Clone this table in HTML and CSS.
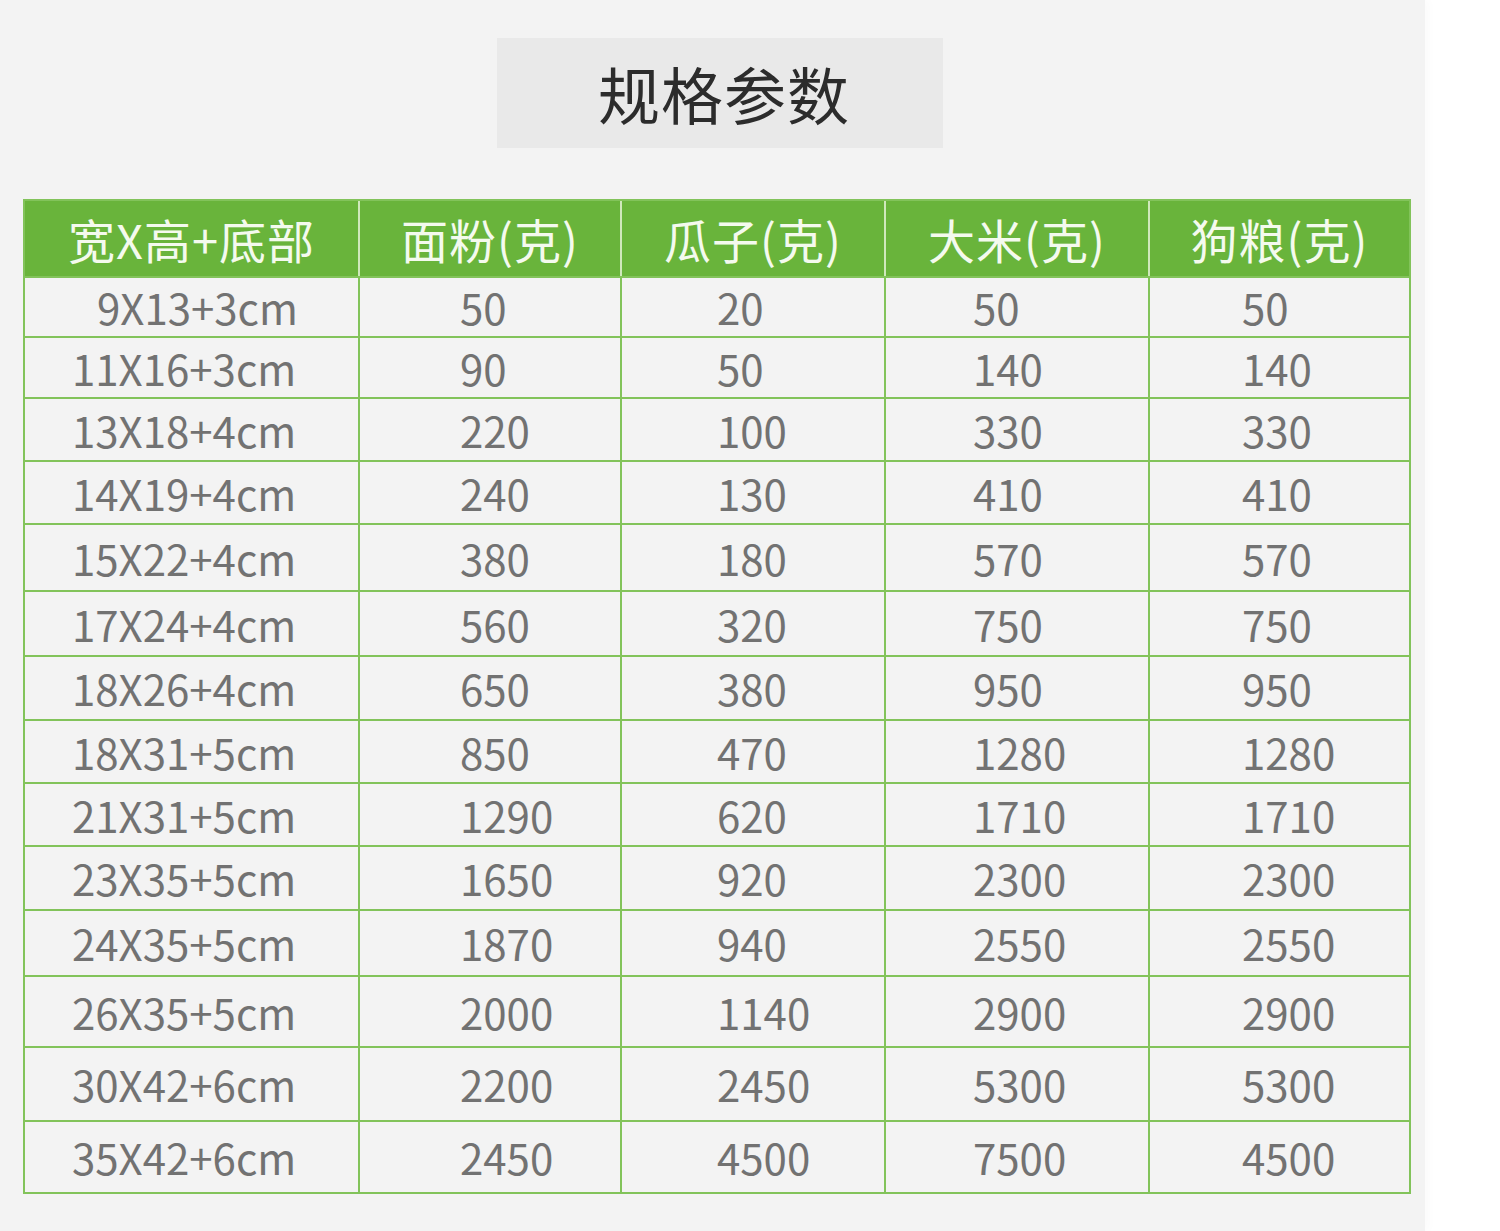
FILE: index.html
```html
<!DOCTYPE html>
<html lang="zh">
<head>
<meta charset="utf-8">
<title>规格参数</title>
<link rel="stylesheet" href="styles.css">
</head>
<body>
<div class="page">
  <div class="title-box"><h1 class="title">规格参数</h1></div>
  <div class="spec">
    <div class="cell head">宽X高+底部</div>
    <div class="cell head">面粉(克)</div>
    <div class="cell head">瓜子(克)</div>
    <div class="cell head">大米(克)</div>
    <div class="cell head last">狗粮(克)</div>

    <div class="cell c1 first">9X13+3cm</div><div class="cell c2">50</div><div class="cell c3">20</div><div class="cell c4">50</div><div class="cell c5">50</div>
    <div class="cell c1">11X16+3cm</div><div class="cell c2">90</div><div class="cell c3">50</div><div class="cell c4">140</div><div class="cell c5">140</div>
    <div class="cell c1">13X18+4cm</div><div class="cell c2">220</div><div class="cell c3">100</div><div class="cell c4">330</div><div class="cell c5">330</div>
    <div class="cell c1">14X19+4cm</div><div class="cell c2">240</div><div class="cell c3">130</div><div class="cell c4">410</div><div class="cell c5">410</div>
    <div class="cell c1">15X22+4cm</div><div class="cell c2">380</div><div class="cell c3">180</div><div class="cell c4">570</div><div class="cell c5">570</div>
    <div class="cell c1">17X24+4cm</div><div class="cell c2">560</div><div class="cell c3">320</div><div class="cell c4">750</div><div class="cell c5">750</div>
    <div class="cell c1">18X26+4cm</div><div class="cell c2">650</div><div class="cell c3">380</div><div class="cell c4">950</div><div class="cell c5">950</div>
    <div class="cell c1">18X31+5cm</div><div class="cell c2">850</div><div class="cell c3">470</div><div class="cell c4">1280</div><div class="cell c5">1280</div>
    <div class="cell c1">21X31+5cm</div><div class="cell c2">1290</div><div class="cell c3">620</div><div class="cell c4">1710</div><div class="cell c5">1710</div>
    <div class="cell c1">23X35+5cm</div><div class="cell c2">1650</div><div class="cell c3">920</div><div class="cell c4">2300</div><div class="cell c5">2300</div>
    <div class="cell c1">24X35+5cm</div><div class="cell c2">1870</div><div class="cell c3">940</div><div class="cell c4">2550</div><div class="cell c5">2550</div>
    <div class="cell c1">26X35+5cm</div><div class="cell c2">2000</div><div class="cell c3">1140</div><div class="cell c4">2900</div><div class="cell c5">2900</div>
    <div class="cell c1">30X42+6cm</div><div class="cell c2">2200</div><div class="cell c3">2450</div><div class="cell c4">5300</div><div class="cell c5">5300</div>
    <div class="cell c1">35X42+6cm</div><div class="cell c2">2450</div><div class="cell c3">4500</div><div class="cell c4">7500</div><div class="cell c5">4500</div>
  </div>
</div>
</body>
</html>
```
FILE: styles.css
```css
html, body {
  margin: 0;
  padding: 0;
  background: #ffffff;
}

.page {
  width: 1425px;
  height: 1231px;
  box-sizing: border-box;
  padding-top: 38px;
  background: #f3f3f3;
  box-shadow: 4px 0 10px rgba(0, 0, 0, 0.02);
  font-family: "Noto Sans CJK SC", "Noto Sans", sans-serif;
  overflow: hidden;
}

.title-box {
  margin-left: 497px;
  width: 446px;
  height: 110px;
  background: #e9e9e9;
  display: flex;
  align-items: center;
  justify-content: center;
}

.title {
  margin: 0 0 0 8px;
  font-size: 62px;
  font-weight: 400;
  line-height: 1;
  color: #2c2c2c;
  letter-spacing: 1px;
}

.spec {
  margin: 51px 0 0 23px;
  width: 1388px;
  box-sizing: border-box;
  padding: 2px;
  background: #82c35a;
  display: grid;
  grid-template-columns: 333px 260px 262px 262px 259px;
  grid-template-rows: 75px 58px 59px 61px 61px 65px 63px 62px 61px 61px 62px 64px 69px 72px 70px;
  gap: 2px;
}

.cell {
  background: #f3f3f3;
  color: #727272;
  font-size: 42px;
  line-height: 1;
  display: flex;
  align-items: center;
  padding-top: 0;
  box-sizing: border-box;
  white-space: nowrap;
}

.head {
  background: #69b43b;
  color: #f4faee;
  font-size: 47px;
  letter-spacing: 1px;
  justify-content: center;
  padding-top: 0;
  box-shadow: 2px 0 0 #cfe8bc;
}

.head.last {
  box-shadow: none;
}

.c1 { padding-left: 47px; }
.c1.first { padding-left: 72px; }
.c2 { padding-left: 100px; }
.c3 { padding-left: 95px; }
.c4 { padding-left: 87px; }
.c5 { padding-left: 92px; }
```
